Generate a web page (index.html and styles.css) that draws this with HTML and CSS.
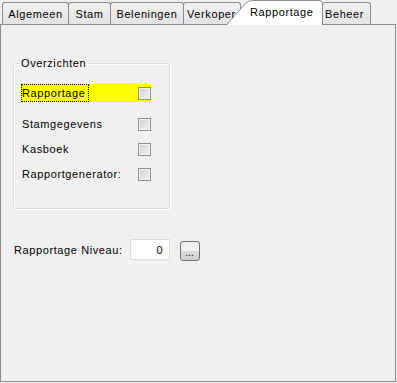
FILE: index.html
```html
<!DOCTYPE html>
<html lang="nl">
<head>
  <meta charset="UTF-8" />
  <title>Rapportage</title>
  <link rel="stylesheet" href="styles.css">
</head>
<body>

  <!-- tabbladen -->
  <div class="tabs">
    <div class="tab tab-algemeen">Algemeen</div>
    <div class="tab tab-stam">Stam</div>
    <div class="tab tab-beleningen">Beleningen</div>
    <div class="tab tab-verkoper">Verkoper</div>
    <div class="tab-active">
      <svg class="tab-shape" width="97" height="25" viewBox="0 0 97 25">
        <path d="M0.5 25 L19.5 3.5 Q22.5 0.5 26.5 0.5 L93 0.5 Q96.5 0.5 96.5 4 L96.5 25" fill="#fff" stroke="#898c95" />
      </svg>
      <span class="tab-label">Rapportage</span>
    </div>
    <div class="tab tab-beheer">Beheer</div>
  </div>

  <!-- inhoud van het tabblad -->
  <div class="panel">
    <fieldset class="group">
      <legend>Overzichten</legend>
      <div class="check-row is-focused">
        <span class="check-label">Rapportage</span>
        <span class="checkbox"></span>
      </div>
      <div class="check-row row-second">
        <span class="check-label">Stamgegevens</span>
        <span class="checkbox"></span>
      </div>
      <div class="check-row">
        <span class="check-label">Kasboek</span>
        <span class="checkbox"></span>
      </div>
      <div class="check-row">
        <span class="check-label">Rapportgenerator:</span>
        <span class="checkbox"></span>
      </div>
    </fieldset>

    <div class="field-row">
      <label class="field-label" for="niveau">Rapportage Niveau:</label>
      <input id="niveau" class="num-input" type="text" value="0" />
      <button class="dots-btn">...</button>
    </div>
  </div>

</body>
</html>
```

FILE: styles.css
```css
html, body {
  margin: 0;
  padding: 0;
  width: 397px;
  height: 383px;
  overflow: hidden;
  background: #f0f0f0;
  color: #000;
  font-family: "Liberation Sans", Arial, sans-serif;
  font-size: 11px;
  letter-spacing: 0.6px;
}

/* tabbladen */
.tabs {
  display: flex;
  align-items: flex-end;
  height: 24px;
  padding-left: 2px;
}

.tab {
  box-sizing: border-box;
  height: 22px;
  line-height: 22px;
  margin-right: -1px;
  border: 1px solid #898c95;
  border-bottom: none;
  border-radius: 3px 3px 0 0;
  background: linear-gradient(#f2f2f2, #e3e3e3);
  text-align: center;
  white-space: nowrap;
  overflow: hidden;
}

.tab-algemeen { width: 67px; }
.tab-stam { width: 43px; }
.tab-beleningen { width: 74px; }
.tab-verkoper { width: 58px; text-align: left; padding-left: 3px; }
.tab-beheer { width: 49px; text-align: left; padding-left: 2px; }

.tab-active {
  position: relative;
  z-index: 2;
  width: 97px;
  height: 25px;
  margin-left: -14px;
  margin-right: -1px;
  margin-bottom: -1px;
}

.tab-shape {
  position: absolute;
  top: 0;
  left: 0;
}

.tab-label {
  position: relative;
  display: block;
  padding-left: 24px;
  line-height: 25px;
}

/* paneel */
.panel {
  position: relative;
  z-index: 1;
  box-sizing: border-box;
  width: 396px;
  height: 358px;
  border: 1px solid #898c95;
  padding: 32px 0 0 12px;
}

.group {
  box-sizing: border-box;
  width: 157px;
  margin: 0;
  padding: 0 0 25px 7px;
  border: 1px solid #d5dfe5;
  border-radius: 3px;
  box-shadow: inset 1px 1px 0 #fff, 1px 1px 0 #fff;
}

.group legend {
  padding: 0 1px;
  margin-left: -1px;
  line-height: 12px;
}

.check-row {
  display: flex;
  align-items: center;
  justify-content: space-between;
  width: 130px;
  height: 18px;
  margin-top: 7px;
}

.check-row:first-of-type {
  margin-top: 15px;
}

.row-second {
  margin-top: 13px;
}

.check-label {
  box-sizing: border-box;
  height: 18px;
  line-height: 18px;
  padding-left: 1px;
}

.is-focused {
  background: #ffff00;
}

.is-focused .check-label {
  border: 1px dotted #000;
  line-height: 16px;
  padding-left: 0;
  padding-right: 2px;
}

.checkbox {
  box-sizing: border-box;
  width: 13px;
  height: 13px;
  border: 1px solid #8e8f8f;
  background: linear-gradient(135deg, #cdcdcd, #f6f6f6);
  box-shadow: inset 0 0 0 1px #f4f4f4;
}

/* niveau */
.field-row {
  display: flex;
  align-items: flex-start;
  margin-top: 30px;
  padding-left: 1px;
}

.field-label {
  line-height: 22px;
  margin-right: 7px;
}

.num-input {
  box-sizing: border-box;
  width: 40px;
  height: 21px;
  margin: 0 10px 0 0;
  padding: 0 6px 0 0;
  border: 1px solid #dcdcdc;
  background: #fff;
  font-family: inherit;
  font-size: 11px;
  text-align: right;
  outline: none;
}

.dots-btn {
  box-sizing: border-box;
  width: 20px;
  height: 20px;
  margin-top: 2px;
  padding: 4px 0 0;
  border: 1px solid #707070;
  border-radius: 3px;
  background: linear-gradient(#f2f2f2 50%, #dddddd 50%, #cfcfcf);
  font-family: inherit;
  font-size: 10px;
  letter-spacing: 0;
  line-height: 12px;
}
```
